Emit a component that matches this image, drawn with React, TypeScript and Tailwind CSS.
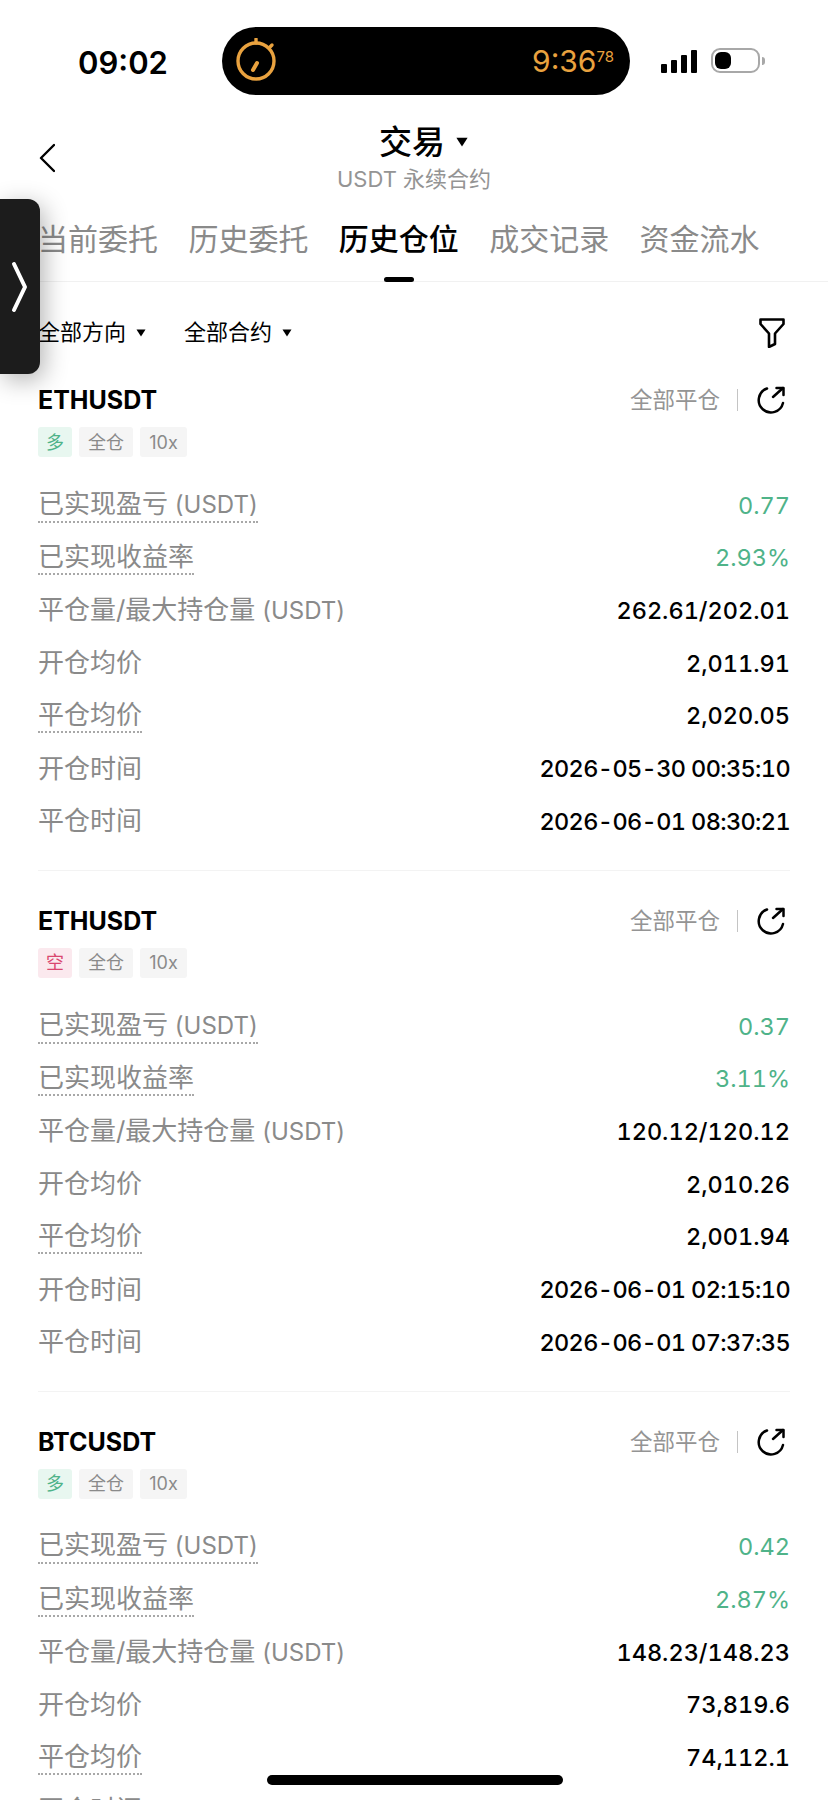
import React from "react";

type Position = {
  symbol: string;
  side: "long" | "short";
  pnl: string;
  rate: string;
  size: string;
  open: string;
  close: string;
  openTime: string;
  closeTime: string;
};

const positions: Position[] = [
  {
    symbol: "ETHUSDT",
    side: "long",
    pnl: "0.77",
    rate: "2.93%",
    size: "262.61/202.01",
    open: "2,011.91",
    close: "2,020.05",
    openTime: "2026-05-30 00:35:10",
    closeTime: "2026-06-01 08:30:21",
  },
  {
    symbol: "ETHUSDT",
    side: "short",
    pnl: "0.37",
    rate: "3.11%",
    size: "120.12/120.12",
    open: "2,010.26",
    close: "2,001.94",
    openTime: "2026-06-01 02:15:10",
    closeTime: "2026-06-01 07:37:35",
  },
  {
    symbol: "BTCUSDT",
    side: "long",
    pnl: "0.42",
    rate: "2.87%",
    size: "148.23/148.23",
    open: "73,819.6",
    close: "74,112.1",
    openTime: "2026-06-01 03:02:44",
    closeTime: "2026-06-01 08:12:09",
  },
];

const tabs = ["当前委托", "历史委托", "历史仓位", "成交记录", "资金流水"];

const Caret = ({ className }: { className: string }) => (
  <svg viewBox="0 0 10 8" className={className} fill="currentColor">
    <path d="M0.5 0.5h9L5 7.5z" />
  </svg>
);

const Row = ({
  label,
  unit,
  value,
  dotted,
  green,
  time,
}: {
  label: string;
  unit?: string;
  value: string;
  dotted?: boolean;
  green?: boolean;
  time?: boolean;
}) => (
  <div className="flex h-[52.7px] items-center justify-between">
    <span
      className={`text-[26px] leading-[32px] text-[#8a8a8a] ${
        dotted ? "border-b-2 border-dotted border-[#a8a8a8]" : ""
      }`}
    >
      {label}
      {unit && <span className="text-[24px]"> {unit}</span>}
    </span>
    <span
      className={`text-[23.5px] tabular-nums ${green ? "text-[#4fb389]" : "font-medium text-black"} ${
        time ? "tracking-[-0.63px]" : ""
      }`}
    >
      {value}
    </span>
  </div>
);

const PositionCard = ({ p }: { p: Position }) => (
  <div className="mb-[35px]">
    <div className="flex h-[30px] items-center justify-between">
      <span className="pt-[2px] text-[25px] font-bold text-black">{p.symbol}</span>
      <div className="flex items-center">
        <span className="text-[22.5px] text-[#949494]">全部平仓</span>
        <span className="ml-[17px] h-[22px] w-px bg-[#c4c4c4]" />
        <svg
          viewBox="0 0 28 28"
          className="ml-[19px] mr-[5px] h-7 w-7 text-black"
          fill="none"
          stroke="currentColor"
          strokeWidth="2.5"
          strokeLinecap="round"
          strokeLinejoin="round"
        >
          <path d="M10 2.5A12.3 12.3 0 1 0 26 17" />
          <path d="M16 11 26 2" />
          <path d="M19.5 2h7v7" />
        </svg>
      </div>
    </div>
    <div className="mt-3 flex h-[30px] gap-[7px] text-[18px]">
      <span
        className={`flex w-[34px] items-center justify-center rounded-[3px] ${
          p.side === "long" ? "bg-[#e8f7f0] text-[#4fb389]" : "bg-[#fbe9ee] text-[#d9476f]"
        }`}
      >
        {p.side === "long" ? "多" : "空"}
      </span>
      <span className="flex w-[54px] items-center justify-center rounded-[3px] bg-[#f5f5f5] text-[#8a8a8a]">
        全仓
      </span>
      <span className="flex w-[47px] items-center justify-center rounded-[3px] bg-[#f5f5f5] text-[#8a8a8a]">
        10x
      </span>
    </div>
    <div className="mt-[22px]">
      <Row label="已实现盈亏" unit="(USDT)" value={p.pnl} dotted green />
      <Row label="已实现收益率" value={p.rate} dotted green />
      <Row label="平仓量/最大持仓量" unit="(USDT)" value={p.size} />
      <Row label="开仓均价" value={p.open} />
      <Row label="平仓均价" value={p.close} dotted />
      <Row label="开仓时间" value={p.openTime} time />
      <Row label="平仓时间" value={p.closeTime} time />
    </div>
    <div className="mt-[22px] h-px bg-[#f3f3f3]" />
  </div>
);

export default function App() {
  return (
    <div className="relative h-[1800px] w-[828px] overflow-hidden bg-white font-['Inter','Noto_Sans_CJK_SC',sans-serif]">
      {/* status bar */}
      <div className="flex h-[96px] items-end pb-px pl-[78px]">
        <span className="mb-[17px] w-[144px] text-[31px] font-semibold leading-none text-black">
          09:02
        </span>
        <div className="flex h-[68px] w-[408px] items-center justify-between rounded-[34px] bg-black pl-[14px] pr-4">
          <svg
            viewBox="0 0 42 46"
            className="h-[46px] w-[42px] text-[#e9a23f]"
            fill="none"
            stroke="currentColor"
            strokeWidth="3.4"
            strokeLinecap="round"
          >
            <circle cx="20" cy="23" r="18" />
            <path d="M20 5V1" />
            <path d="M33 10l3-3" />
            <path d="M21 25l-4 7" strokeWidth="4" />
          </svg>
          <span className="text-[30px] leading-none text-[#e9a23f]">
            9:36<sup className="relative -top-[10px] align-baseline text-[15px]">78</sup>
          </span>
        </div>
        <div className="mb-[22px] ml-[31px] flex items-end gap-1">
          <span className="h-[9px] w-[6px] rounded-[1px] bg-black" />
          <span className="h-[13px] w-[6px] rounded-[1px] bg-black" />
          <span className="h-[18px] w-[6px] rounded-[1px] bg-black" />
          <span className="h-[23px] w-[6px] rounded-[1px] bg-black" />
        </div>
        <div className="mb-[22px] ml-[14px] flex items-center">
          <div className="flex h-[25px] w-[49px] items-center rounded-[9px] border-2 border-[#a8a8a8] px-[2px] py-[2px]">
            <span className="h-[17px] w-4 rounded-[6px] bg-black" />
          </div>
          <span className="ml-[2px] h-2 w-[3px] rounded-r bg-[#a8a8a8]" />
        </div>
      </div>

      {/* title */}
      <div className="relative flex h-[68px] flex-col items-center pt-[24px]">
        <svg
          viewBox="0 0 16 44"
          className="absolute left-[39px] top-[40px] h-[44px] w-4 text-black"
          fill="none"
          stroke="currentColor"
          strokeWidth="2.4"
          strokeLinecap="round"
          strokeLinejoin="round"
        >
          <path d="M15 9 2 22l13 13" />
        </svg>
        <div className="flex items-center pl-[20px] leading-none">
          <span className="text-[33px] font-medium leading-[44px] text-black">交易</span>
          <Caret className="ml-[10px] h-[10px] w-[14px] text-black" />
        </div>
        <span className="text-[22px] leading-[30px] text-[#949494]">USDT 永续合约</span>
      </div>

      {/* tabs */}
      <div className="mt-[38px] flex h-[80px] gap-[30.4px] border-b border-[#f1f1f1] pl-[38px]">
        {tabs.map((t, i) => (
          <div key={t} className="relative flex h-[80px] flex-col items-center">
            <span
              className={`mt-[15px] text-[30px] leading-[44px] ${
                i === 2 ? "font-medium text-black" : "text-[#8a8a8a]"
              }`}
            >
              {t}
            </span>
            {i === 2 && (
              <span className="absolute bottom-0 h-[5px] w-[30px] rounded-full bg-black" />
            )}
          </div>
        ))}
      </div>

      <div className="px-[38px]">
        {/* filters */}
        <div className="flex h-[103px] items-center justify-between pb-[2px]">
          <div className="flex items-center text-[22px] text-black">
            <span>全部方向</span>
            <Caret className="ml-[9px] h-2 w-3" />
            <span className="ml-[37px]">全部合约</span>
            <Caret className="ml-[9px] h-2 w-3" />
          </div>
          <svg
            viewBox="0 0 26 30"
            className="mr-[5px] h-[30px] w-[26px] text-black"
            fill="none"
            stroke="currentColor"
            strokeWidth="2.6"
            strokeLinejoin="round"
          >
            <path d="M1.5 1.5h23v4.5L16 15.5V26l-6 3V15.5L1.5 6z" />
          </svg>
        </div>

        {positions.map((p, i) => (
          <PositionCard key={i} p={p} />
        ))}
      </div>

      {/* floating side handle */}
      <div className="absolute left-0 top-[199px] flex h-[175px] w-10 items-center rounded-r-[12px] bg-[#1c1c1c] pl-[10px] shadow-[4px_6px_24px_rgba(0,0,0,0.3)]">
        <svg
          viewBox="0 0 18 52"
          className="h-[52px] w-[18px] text-white"
          fill="none"
          stroke="currentColor"
          strokeWidth="4"
          strokeLinecap="round"
          strokeLinejoin="round"
        >
          <path d="M4 3l11 23L4 49" />
        </svg>
      </div>

      {/* home indicator */}
      <div className="absolute bottom-[15px] left-[267px] h-[10px] w-[296px] rounded-full bg-black" />
    </div>
  );
}
